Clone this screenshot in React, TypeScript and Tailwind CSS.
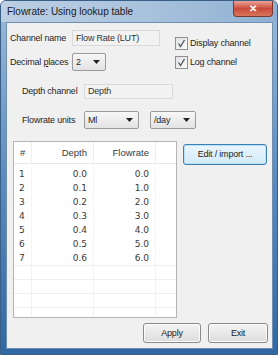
const rows = [
  ['1', '0.0', '0.0'],
  ['2', '0.1', '1.0'],
  ['3', '0.2', '2.0'],
  ['4', '0.3', '3.0'],
  ['5', '0.4', '4.0'],
  ['6', '0.5', '5.0'],
  ['7', '0.6', '6.0'],
];

function Combo({ value, width }: { value: string; width: string }) {
  return (
    <div className={`${width} h-[18px] flex items-center justify-between pl-[3px] pr-[5px] bg-gradient-to-b from-[#f7f7f7] to-[#e3e3e3] border border-[#9a9a9a] rounded-[2px]`}>
      <span>{value}</span>
      <svg width="7" height="4" viewBox="0 0 7 4">
        <path d="M0 0 L7 0 L3.5 4 Z" fill="#222" />
      </svg>
    </div>
  );
}

function Check({ label }: { label: string }) {
  return (
    <div className="flex items-center gap-[2px] h-[13px]">
      <div className="w-[13px] h-[13px] border border-[#8f8f8f] bg-gradient-to-br from-[#e2e2e2] to-[#fafafa] flex items-center justify-center">
        <svg width="9" height="9" viewBox="0 0 9 9">
          <path d="M1.5 4.5 L3.5 7.5 L7.5 1" stroke="#4a5560" strokeWidth="1.3" fill="none" />
        </svg>
      </div>
      <span className="whitespace-nowrap">{label}</span>
    </div>
  );
}

function Button({ label, primary }: { label: string; primary?: boolean }) {
  return (
    <div
      className={`h-full flex items-center justify-center rounded-[3px] border whitespace-nowrap ${
        primary
          ? 'border-[#3c7fb1] bg-gradient-to-b from-[#eaf6fd] to-[#d3eaf8] shadow-[inset_0_0_0_1px_#b9e2f8]'
          : 'border-[#8a8a8a] bg-gradient-to-b from-[#f4f4f4] to-[#dddddd] shadow-[inset_0_0_0_1px_#fbfbfb]'
      }`}
    >
      {label}
    </div>
  );
}

export default function App() {
  return (
    <div className="w-[278px] h-[355px] flex flex-col bg-gradient-to-b from-[#9fbbd8] via-[#5a8cc0] to-[#2f68a3] rounded-t-[6px] border border-[#3a5f86] text-[9px] leading-[11px] tracking-[-0.2px] text-[#1e1e1e] font-['Liberation_Sans',Arial,sans-serif] overflow-hidden">
      {/* Title bar */}
      <div className="h-[21px] shrink-0 flex items-start justify-between pl-[6px] pr-[4px] bg-gradient-to-r from-[#bccfe3] via-[#aac3dd] to-[#8fb0d2]">
        <span className="mt-[5px] text-[#1a1a1a] text-[10px] leading-[12px] tracking-normal">Flowrate: Using lookup table</span>
        <div className="w-[40px] h-[16px] rounded-b-[4px] border border-[#7a3a32] border-t-0 bg-gradient-to-b from-[#e8a595] via-[#c94a3c] to-[#d8745a] flex items-center justify-center text-white font-bold text-[10px]">
          ✕
        </div>
      </div>

      {/* Client area */}
      <div className="h-[327px] shrink-0 ml-[5px] mr-[4px] bg-[#f0f0f0] border border-[#6e8fb0] flex flex-col">
        <div className="flex">
          <div className="flex flex-col w-[165px]">
            <div className="flex items-center mt-[7px] pl-[3px] h-[16px]">
              <span className="w-[62px] whitespace-nowrap">Channel name</span>
              <div className="w-[88px] h-[16px] flex items-center pl-[3px] bg-[#f2f2f2] border border-[#dadada] text-[#333] whitespace-nowrap">
                Flow Rate (LUT)
              </div>
            </div>
            <div className="flex items-center mt-[7px] pl-[3px]">
              <span className="w-[62px] whitespace-nowrap">
                Decimal <span className="underline">p</span>laces
              </span>
              <Combo value="2" width="w-[34px]" />
            </div>
          </div>
          <div className="flex flex-col gap-[6px] mt-[14px] ml-[3px]">
            <Check label="Display channel" />
            <Check label="Log channel" />
          </div>
        </div>

        <div className="flex items-center mt-[13px] pl-[15px] h-[15px]">
          <span className="w-[62px] whitespace-nowrap">Depth channel</span>
          <div className="w-[89px] h-[15px] flex items-center pl-[3px] bg-[#f2f2f2] border border-[#dadada] text-[#333]">
            Depth
          </div>
        </div>

        <div className="flex items-center mt-[12px] pl-[15px]">
          <span className="w-[62px] whitespace-nowrap">Flowrate units</span>
          <Combo value="Ml" width="w-[55px]" />
          <div className="ml-[11px]">
            <Combo value="/day" width="w-[46px]" />
          </div>
        </div>

        <div className="flex mt-[12px] pl-[6px]">
          {/* Table */}
          <div className="w-[164px] h-[177px] bg-white border border-[#b4b4b4] font-['DejaVu_Sans',sans-serif] text-[9px] tracking-normal text-[#3a3a3a] overflow-hidden">
            <div className="flex h-[22px] border-b border-[#e8e8e8] font-['Liberation_Sans',sans-serif] text-[9.5px]">
              <div className="w-[18px] h-full flex items-center pl-[6px] border-r border-[#efefef]">#</div>
              <div className="w-[62px] h-full flex items-center justify-end pr-[6px] border-r border-[#efefef]">Depth</div>
              <div className="w-[62px] h-full flex items-center justify-end pr-[6px] border-r border-[#efefef]">Flowrate</div>
            </div>
            <div className="h-[3px]" />
            {rows.map(([n, d, f]) => (
              <div key={n} className="flex h-[14px] items-center">
                <div className="w-[18px] h-full flex items-center pl-[5px] border-r border-[#f5f5f5]">{n}</div>
                <div className="w-[62px] h-full flex items-center justify-end pr-[6px] border-r border-[#f5f5f5]">{d}</div>
                <div className="w-[62px] h-full flex items-center justify-end pr-[6px] border-r border-[#f5f5f5]">{f}</div>
              </div>
            ))}
            {[0, 1, 2, 3, 4].map((i) => (
              <div key={i} className="flex h-[14px] border-t border-[#f0f0f0]">
                <div className="w-[18px] h-full border-r border-[#f3f3f3]" />
                <div className="w-[62px] h-full border-r border-[#f3f3f3]" />
                <div className="w-[62px] h-full border-r border-[#f3f3f3]" />
              </div>
            ))}
          </div>
          <div className="ml-[6px] mt-[3px] w-[84px] h-[21px]">
            <Button label="Edit / import ..." primary />
          </div>
        </div>

        <div className="flex justify-end gap-[7px] mt-[5px] pr-[4px]">
          <div className="w-[58px] h-[20px]">
            <Button label="Apply" />
          </div>
          <div className="w-[60px] h-[20px]">
            <Button label="Exit" />
          </div>
        </div>
      </div>
    </div>
  );
}
